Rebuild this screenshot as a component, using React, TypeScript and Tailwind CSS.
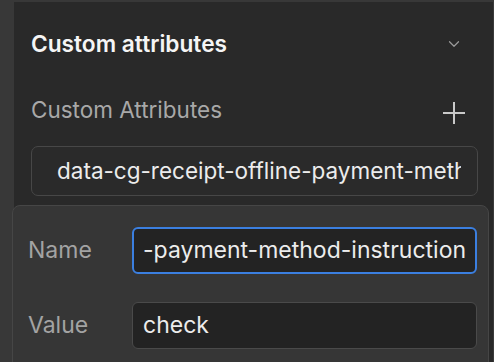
import { ChevronDown } from 'lucide-react';

const font = { fontFamily: 'Inter, "Noto Sans", sans-serif' };

function Field({ label, value, focused }: { label: string; value: string; focused?: boolean }) {
  return (
    <div className="flex items-center">
      <span className="w-[104px] text-[23px] text-[#a3a3a3]">{label}</span>
      <div
        className={
          focused
            ? 'flex h-[47px] w-[345px] items-center overflow-hidden rounded-[6px] border-2 border-[#3b7fe0] bg-[#232323] pl-[9px]'
            : 'flex h-[47px] w-[345px] items-center overflow-hidden rounded-[6px] border border-[#4a4a4a] bg-[#232323] pl-[10px]'
        }
      >
        <span className="whitespace-nowrap text-[23px] text-[#ececec]">{value}</span>
      </div>
    </div>
  );
}

export default function App() {
  return (
    <div className="h-[362px] w-[494px] overflow-hidden bg-[#383838] pl-[14px] pt-[2px]" style={font}>
      <div className="relative h-full border-r border-[#3a3a3a] bg-[#292929]">
        <div className="flex h-[88px] items-center justify-between pl-[17px] pr-[30px] pb-[4px]">
          <h2 className="text-[22.7px] font-semibold text-[#f5f5f5]">Custom attributes</h2>
          <ChevronDown size={18} strokeWidth={1.6} className="text-[#9a9a9a]" />
        </div>
        <div className="mt-[3px] flex items-center justify-between pl-[17px] pr-[28px]">
          <span className="text-[22.5px] text-[#a8a8a8]">Custom Attributes</span>
          <svg width="22" height="22" viewBox="0 0 22 22" className="mt-[7px] text-[#c9c9c9]">
            <path d="M11 0v22M0 11h22" stroke="currentColor" strokeWidth="2" />
          </svg>
        </div>
        <div className="ml-[17px] mt-[19px] flex h-[50px] w-[447px] items-center rounded-[7px] border border-[#474747] bg-[#2a2a2a] pl-[25px] pr-[16px]">
          <div className="overflow-hidden">
            <span className="whitespace-nowrap text-[22.5px] text-[#ececec]">data-cg-receipt-offline-payment-method-instruction</span>
          </div>
        </div>
        <div className="absolute left-[-2px] right-[4px] top-[203px] h-[170px] rounded-tl-[8px] rounded-tr-[8px] border border-[#464646] bg-[#363636] pl-[15px] pt-[21px]">
          <div className="flex flex-col gap-[28px]">
            <Field label="Name" value="-payment-method-instruction" focused />
            <Field label="Value" value="check" />
          </div>
        </div>
      </div>
    </div>
  );
}
